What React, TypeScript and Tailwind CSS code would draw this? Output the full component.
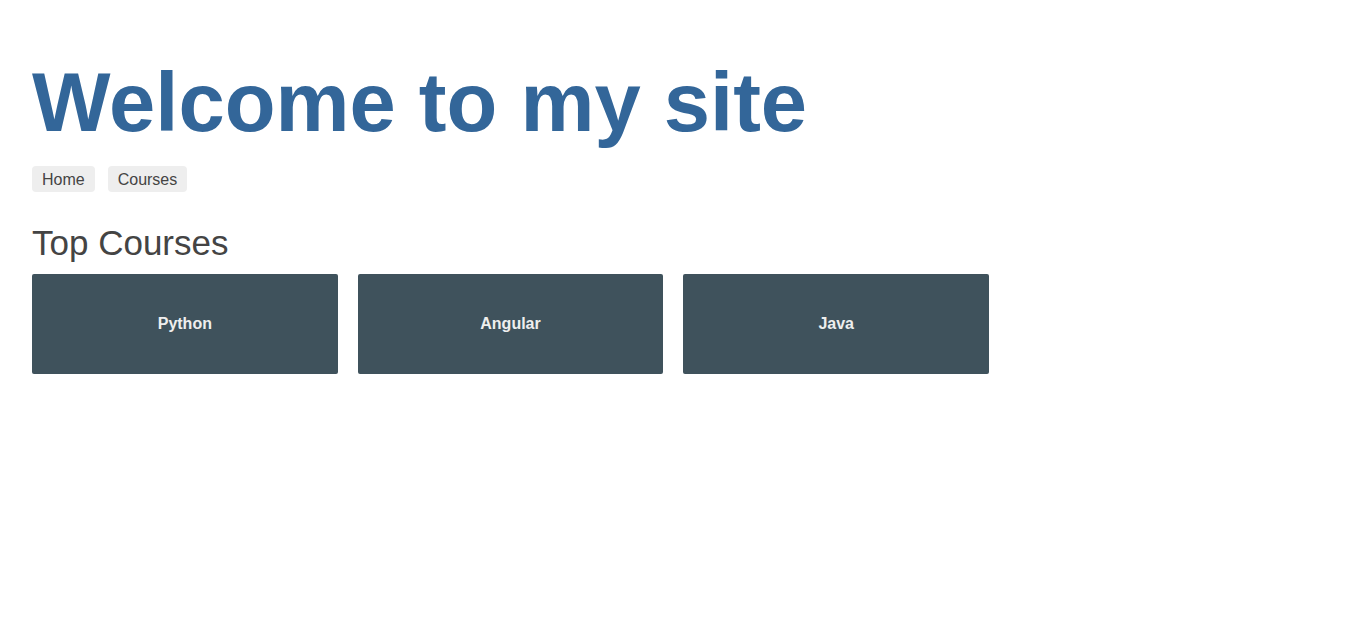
import React from 'react';

const courses = ['Python', 'Angular', 'Java'];

const App: React.FC = () => {
  return (
    <div className="min-h-screen bg-white px-8 pt-[55px] font-['Liberation_Sans',Arial,sans-serif]">
      <h1 className="text-[83.2px] leading-[96px] font-bold text-[#336699]">Welcome to my site</h1>

      <nav className="mt-[15px] flex gap-[13px]">
        <a className="rounded-[4px] bg-[#eeeeee] px-[10px] pt-[5px] pb-[4px] text-[16px] leading-[17px] text-[#444] cursor-pointer">Home</a>
        <a className="rounded-[4px] bg-[#eeeeee] px-[10px] pt-[5px] pb-[4px] text-[16px] leading-[17px] text-[#444] cursor-pointer">Courses</a>
      </nav>

      <h2 className="mt-[31px] text-[35px] leading-[40px] text-[#444444]">Top Courses</h2>

      <div className="mt-[11px] flex w-[957px] gap-5">
        {courses.map((c) => (
          <div
            key={c}
            className="flex h-[100px] flex-1 items-center justify-center rounded-[2px] bg-[#3f525c] text-[16px] font-bold text-[#eeeeee]"
          >
            {c}
          </div>
        ))}
      </div>
    </div>
  );
};

export default App;
